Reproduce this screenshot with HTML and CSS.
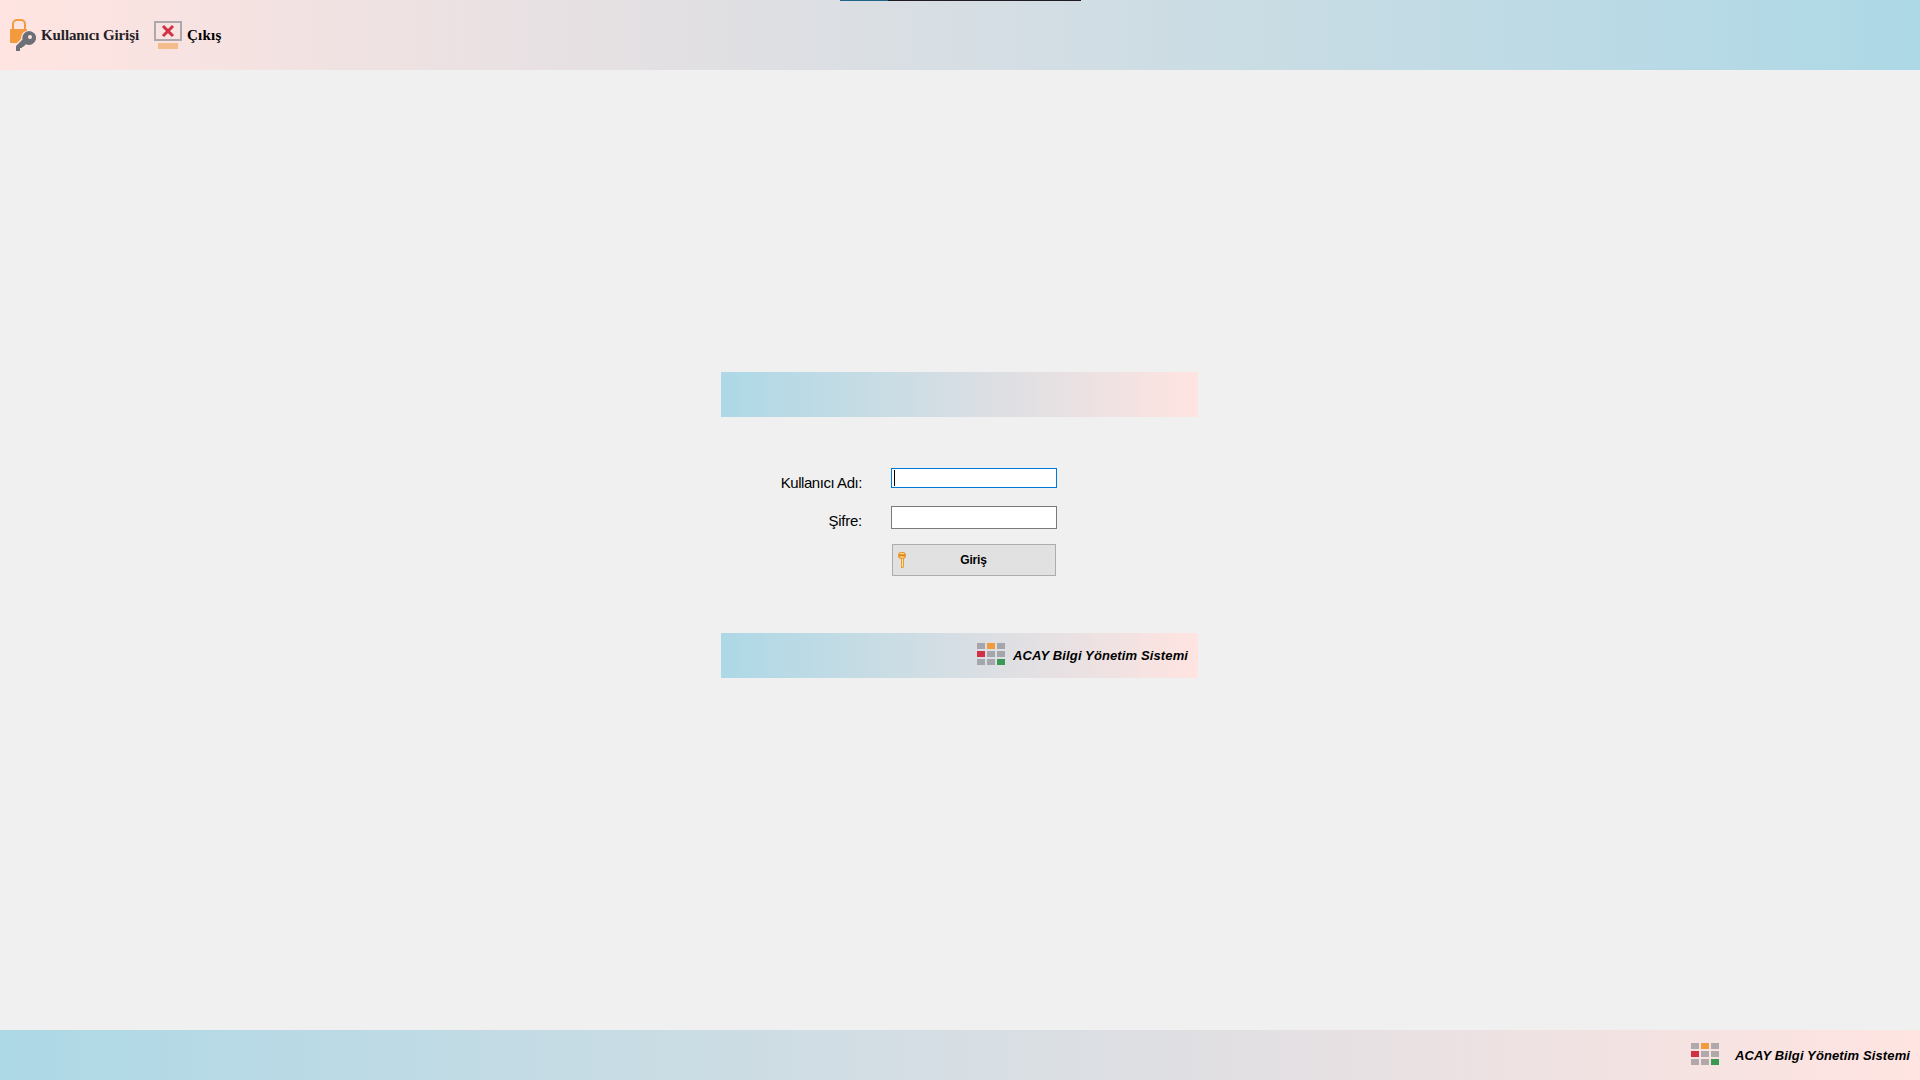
FILE: index.html
```html
<!DOCTYPE html>
<html lang="tr">
<head>
<meta charset="utf-8">
<title>ACAY Bilgi Yönetim Sistemi</title>
<link rel="stylesheet" href="styles.css">
</head>
<body>
<header class="toolbar">
  <div class="top-strip"></div>
  <button class="tool tool-login">
    <svg width="26" height="32" viewBox="0 0 26 32">
      <path d="M3 10V5a4 4 0 0 1 4-4h4a4 4 0 0 1 4 4v5" fill="none" stroke="#f3993e" stroke-width="2"/>
      <path d="M1 10h16v1.500a8.500 8.500 0 0 0-6 8.500L7 24H1a1 1 0 0 1-1-1V11a1 1 0 0 1 1-1z" fill="#f3993e"/>
      <path d="M19 12a7 7 0 1 1-3 13.300L13 28h-1v1h-2v3H6v-5l6.500-6.500A7 7 0 0 1 19 12zM20 16a2 2 0 1 0 0 4 2 2 0 0 0 0-4z" fill="#6d6e76" fill-rule="evenodd"/>
    </svg>
    <span class="tool-text login-text">Kullanıcı Girişi</span>
  </button>
  <button class="tool tool-exit">
    <svg width="28" height="28" viewBox="0 0 28 28">
      <rect x="1" y="1" width="26" height="18" fill="none" stroke="#aea7ab" stroke-width="2"/>
      <path d="M9 5l10 10M19 5L9 15" stroke="#d23044" stroke-width="3"/>
      <rect x="4" y="22" width="20" height="6" fill="#f5bd8d"/>
    </svg>
    <span class="tool-text exit-text">Çıkış</span>
  </button>
</header>
<main class="workspace">
  <section class="login-panel">
    <div class="band"></div>
    <form class="login-form">
      <label class="label label-user" for="user">Kullanıcı Adı:</label>
      <div class="field field-active" id="user"><span class="caret"></span></div>
      <label class="label label-pass" for="pass">Şifre:</label>
      <div class="field field-pass" id="pass"></div>
      <button class="submit" type="button">
        <svg class="key" width="8" height="16" viewBox="0 0 8 16">
          <path d="M2 0h4l2 2v3L6 7v8l-1 1H3V7H2L0 5V2z" fill="#ec9c35"/>
          <path d="M2 1.500h4M2 5h4M4.500 7v8" stroke="#ffe09a" fill="none"/>
          <path d="M1 3.500h6" stroke="#dc8424"/>
        </svg>
        <span class="submit-text">Giriş</span>
      </button>
    </form>
    <div class="band band-brand">
      <svg class="logo logo-cool" width="28" height="22" viewBox="0 0 28 22">
        <path d="M0 0h8v6H0zM20 0h8v6h-8zM10 8h8v6h-8zM20 8h8v6h-8zM0 16h8v6H0zM10 16h8v6h-8z"/>
        <path d="M10 0h8v6h-8z" fill="#f3993e"/><path d="M0 8h8v6H0z" fill="#d23044"/><path d="M20 16h8v6h-8z" fill="#399853"/>
      </svg>
      <span class="brand">ACAY Bilgi Yönetim Sistemi</span>
    </div>
  </section>
</main>
<footer class="statusbar">
  <svg class="logo logo-warm" width="28" height="22" viewBox="0 0 28 22">
    <path d="M0 0h8v6H0zM20 0h8v6h-8zM10 8h8v6h-8zM20 8h8v6h-8zM0 16h8v6H0zM10 16h8v6h-8z"/>
    <path d="M10 0h8v6h-8z" fill="#f3993e"/><path d="M0 8h8v6H0z" fill="#d23044"/><path d="M20 16h8v6h-8z" fill="#399853"/>
  </svg>
  <span class="brand">ACAY Bilgi Yönetim Sistemi</span>
</footer>
</body>
</html>
```
FILE: styles.css
```css
* { box-sizing: border-box; }
body {
  margin: 0;
  height: 1080px;
  display: flex;
  flex-direction: column;
  overflow: hidden;
  background: #f0f0f0;
  color: #000;
  font-family: "Liberation Sans", Arial, sans-serif;
}
svg { display: block; flex: none; }
button { font: inherit; color: inherit; padding: 0; border: 0; background: none; }

.toolbar {
  position: relative;
  flex: none;
  height: 70px;
  padding: 19px 10px 0;
  display: flex;
  align-items: flex-start;
  background: linear-gradient(90deg, #ffe4e1, #add8e6);
}
.top-strip {
  position: absolute;
  top: 0;
  left: 840px;
  width: 241px;
  height: 1px;
  background: linear-gradient(90deg, #206388 48px, #211c22 48px);
}
.tool { display: flex; align-items: flex-start; }
.tool-login { width: 144px; gap: 5px; color: #252126; }
.tool-exit { gap: 5px; padding-top: 2px; }
.tool-text {
  font: bold 15px/18px "Liberation Serif", "Times New Roman", serif;
  white-space: nowrap;
  margin-top: 7px;
}
.login-text { letter-spacing: -0.1px; }
.exit-text { margin-top: 5px; letter-spacing: 0.25px; }

.workspace { flex: 1; display: flex; justify-content: center; padding-top: 302px; }
.login-panel { width: 477px; height: 306px; margin-right: 1px; display: flex; flex-direction: column; }
.band { flex: none; height: 45px; background: linear-gradient(90deg, #add8e6, #ffe4e1); }
.band-brand { display: flex; padding: 10px 8px 0 256px; gap: 8px; }
.login-form {
  flex: 1;
  display: grid;
  grid-template-columns: 141px 166px;
  grid-template-rows: 20px 23px 32px;
  column-gap: 29px;
  row-gap: 18px;
  align-content: start;
  padding-top: 51px;
}
.label { font-size: 15px; line-height: 18px; text-align: right; white-space: nowrap; padding-top: 6px; }
.label-user { letter-spacing: -0.45px; }
.label-pass { letter-spacing: -0.25px; }
.field { background: #fff; border: 1px solid #7a7a7a; }
.field-active { border-color: #0078d7; padding: 1px 2px; }
.caret { display: block; width: 1px; height: 16px; background: #000; }
.submit {
  grid-column: 2;
  margin: -3px 1px 3px;
  height: 32px;
  display: grid;
  grid-template-columns: 8px 1fr;
  align-items: center;
  padding: 0 6px 0 5px;
  background: #e1e1e1;
  border: 1px solid #adadad;
}
.submit-text { font-size: 12px; font-weight: bold; letter-spacing: -0.2px; text-align: center; padding-right: 8px; }
.logo-cool { fill: #a5a6ab; }
.logo-warm { fill: #b1a8ab; }
.brand {
  font-size: 13px;
  line-height: 16px;
  font-weight: bold;
  font-style: italic;
  letter-spacing: 0.12px;
  white-space: nowrap;
  margin-top: 5px;
}
.statusbar {
  flex: none;
  height: 50px;
  display: flex;
  padding: 13px 0 0 1691px;
  gap: 16px;
  background: linear-gradient(90deg, #add8e6, #ffe4e1);
}
```
